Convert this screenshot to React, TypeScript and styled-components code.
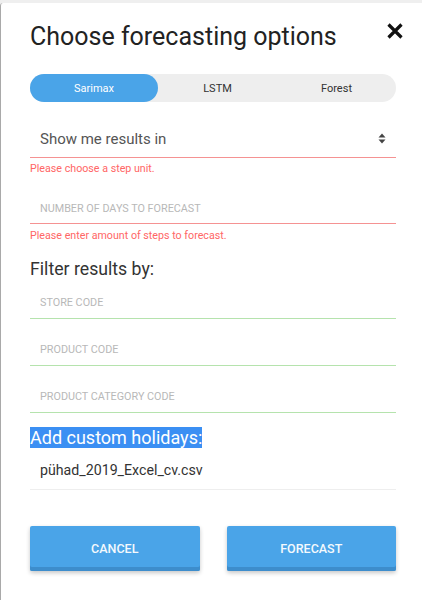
import React, { useState } from 'react';
import styled, { createGlobalStyle } from 'styled-components';

const GlobalStyle = createGlobalStyle`
  html, body {
    margin: 0;
    padding: 0;
    background: #efefef;
    font-family: Roboto, "Liberation Sans", Arial, sans-serif;
  }
  * { box-sizing: border-box; }
`;

const Modal = styled.div`
  position: relative;
  margin-top: 3px;
  min-height: 597px;
  background: #fff;
  border-left: 1px solid #a9a9a9;
  border-top-left-radius: 3px;
  padding: 19px 26px 20px 29px;
`;

const Title = styled.h1`
  margin: 0;
  font-size: 25px;
  line-height: 30px;
  font-weight: 400;
  color: #222;
`;

// close button sits over the header corner
const CloseButton = styled.button`
  position: absolute;
  top: 19px;
  right: 18px;
  width: 18px;
  height: 18px;
  padding: 0;
  border: none;
  background: none;
  cursor: pointer;
`;

const Tabs = styled.div`
  margin-top: 22px;
  display: grid;
  grid-template-columns: 128px 1fr 1fr;
  height: 28px;
  background: #eeeeee;
  border-radius: 14px;
`;

const Tab = styled.button<{ active: boolean }>`
  border: none;
  border-radius: 14px;
  font-family: inherit;
  font-size: 11px;
  padding: 0;
  cursor: pointer;
  background: ${p => (p.active ? '#4aa4e8' : 'transparent')};
  color: ${p => (p.active ? '#fff' : '#333')};
`;

const Field = styled.div<{ tone: 'error' | 'ok' | 'plain' }>`
  display: flex;
  align-items: center;
  justify-content: space-between;
  padding: 0 10px;
  border-bottom: 1px solid
    ${p => (p.tone === 'error' ? '#f59292' : p.tone === 'ok' ? '#b5e3ad' : '#eeeeee')};
`;

const SelectField = styled(Field)`
  margin-top: 16px;
  height: 40px;
  font-size: 15px;
  color: #555;
  padding-top: 2px;
`;

const InputField = styled(Field)<{ gap: number }>`
  margin-top: ${p => p.gap}px;
  height: ${p => (p.gap === 16 ? 31 : 33)}px;
`;

const Placeholder = styled.span`
  font-size: 10.8px;
  color: #b8b8b8;
`;

const ErrorText = styled.div<{ gap: number }>`
  margin-top: ${p => p.gap}px;
  font-size: 10.7px;
  line-height: 16px;
  color: #ff6666;
`;

const SectionTitle = styled.h2`
  margin: 14px 0 0;
  font-size: 17.7px;
  line-height: 22px;
  font-weight: 400;
  color: #333;
`;

const HolidayTitle = styled.h2`
  margin: 14px 0 0;
  font-size: 18px;
  line-height: 21px;
  font-weight: 400;
`;

const Selected = styled.span`
  background: #3b8ff3;
  color: #fff;
`;

const FileRow = styled(Field)`
  margin-top: 3px;
  height: 39px;
  font-size: 14.2px;
  color: #333;
`;

const Actions = styled.div`
  margin-top: 36px;
  display: grid;
  grid-template-columns: 1fr 1fr;
  gap: 27px;
`;

const ActionButton = styled.button`
  height: 45px;
  border: none;
  border-radius: 2px;
  background: #4aa4e8;
  box-shadow: inset 0 -4px 0 #3d8dcc, 0 2px 4px rgba(0, 0, 0, 0.22);
  color: #f4f9fd;
  font-family: inherit;
  font-size: 12.5px;
  font-weight: 500;
  cursor: pointer;
`;

const SortArrows = () => (
  <svg width="8" height="11" viewBox="0 0 8 11">
    <path d="M4 0.5 L7.5 4.5 H0.5 Z" fill="#444" />
    <path d="M4 10.5 L7.5 6.5 H0.5 Z" fill="#444" />
  </svg>
);

const models = ['Sarimax', 'LSTM', 'Forest'];

const filters = ['STORE CODE', 'PRODUCT CODE', 'PRODUCT CATEGORY CODE'];

export default function App() {
  const [model, setModel] = useState('Sarimax');

  return (
    <>
      <GlobalStyle />
      <Modal>
        <Title>Choose forecasting options</Title>
        <CloseButton aria-label="close">
          <svg width="18" height="18" viewBox="0 0 18 18">
            <path d="M2.5 2.5 L15.5 15.5 M15.5 2.5 L2.5 15.5" stroke="#111" strokeWidth="3.2" />
          </svg>
        </CloseButton>

        <Tabs>
          {models.map(m => (
            <Tab key={m} active={m === model} onClick={() => setModel(m)}>
              {m}
            </Tab>
          ))}
        </Tabs>

        <SelectField tone="error">
          <span>Show me results in</span>
          <SortArrows />
        </SelectField>
        <ErrorText gap={3}>Please choose a step unit.</ErrorText>

        <InputField tone="error" gap={16}>
          <Placeholder>NUMBER OF DAYS TO FORECAST</Placeholder>
        </InputField>
        <ErrorText gap={4}>Please enter amount of steps to forecast.</ErrorText>

        <SectionTitle>Filter results by:</SectionTitle>
        {filters.map((f, i) => (
          <InputField key={f} tone="ok" gap={i === 0 ? 6 : 14}>
            <Placeholder>{f}</Placeholder>
          </InputField>
        ))}

        <HolidayTitle>
          <Selected>Add custom holidays:</Selected>
        </HolidayTitle>
        <FileRow tone="plain">pühad_2019_Excel_cv.csv</FileRow>

        <Actions>
          <ActionButton>CANCEL</ActionButton>
          <ActionButton>FORECAST</ActionButton>
        </Actions>
      </Modal>
    </>
  );
}
